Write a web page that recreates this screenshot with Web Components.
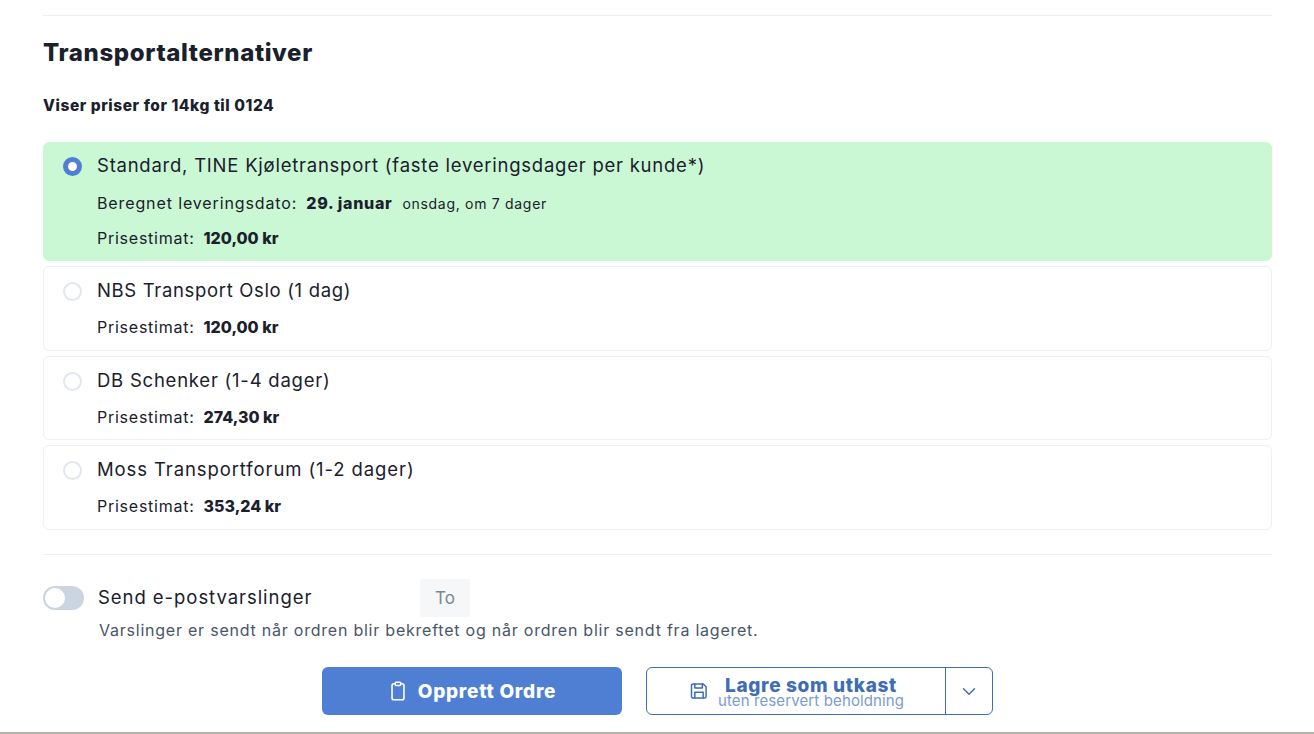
<!DOCTYPE html>
<html lang="no">
<head>
<meta charset="utf-8">
<title>Transportalternativer</title>
<style>
      html,body {margin:0;padding:0;background:#fff}
      body {font-family:Inter,"Noto Sans",sans-serif;color:#1a202c;height:734px;overflow:hidden}
</style>
</head>
<body>

<template id=shipping-option-template>
      <style>
            :host {display:block;box-sizing:border-box;border:1px solid #edf0f4;border-radius:6px;height:84.5px;padding:11px 18px 0 19px;background:#fff}
            :host([selected]) {background:#caf7d4;border-color:#caf7d4;height:119px;padding-top:10px}
            :host([selected]) ::slotted(info-line) {margin-top:15px}
            :host([selected]) ::slotted(info-line:last-child) {margin-top:12px}
            .row {display:flex;gap:15px}
            .radio {width:19px;height:19px;box-sizing:border-box;border:2px solid #e2e7ef;border-radius:50%;background:#fff;flex:none;margin-top:4px}
            :host([selected]) .radio {border:5.5px solid #4f7fd3}
            .body {display:flex;flex-direction:column;min-width:0}
            .name {font-size:18.5px;line-height:24px;letter-spacing:var(--name-spacing,.7px);color:#1a202c;white-space:nowrap}
      </style>
      <div class=row>
            <span class=radio></span>
            <div class=body>
                  <span class=name><slot></slot></span>
                  <slot name=lines></slot>
            </div>
      </div>
</template>

<template id=info-line-template>
      <style>
            :host {display:flex;align-items:baseline;font-size:16px;line-height:22px;margin-top:14px;white-space:nowrap;color:#1a202c}
            .label {letter-spacing:.75px}
            b {font-weight:800;margin-left:9px;letter-spacing:0}
            small {font-size:14px;margin-left:10px;letter-spacing:.7px}
      </style>
      <span class=label><slot name=label></slot></span><b><slot name=value></slot></b><small><slot name=note></slot></small>
</template>

<template id=toggle-switch-template>
      <style>
            :host {display:block;flex:none;width:41px;height:24px;box-sizing:border-box;background:#cbd5e1;border-radius:12px;padding:2px}
            i {display:block;width:20px;height:20px;background:#fff;border-radius:50%}
      </style>
      <i></i>
</template>

<template id=primary-button-template>
      <style>
            :host {display:flex;align-items:center;justify-content:center;gap:9px;box-sizing:border-box;width:300px;height:48px;background:#4f7fd3;border-radius:6px;color:#fff;font-size:19px;font-weight:800;letter-spacing:.75px}
            svg {width:22px;height:22px;display:block}
      </style>
      <svg viewBox="0 0 24 24" fill="none" stroke="currentColor" stroke-width="1.7" stroke-linecap="round" stroke-linejoin="round"><path d="M9 4H7.500A2 2 0 0 0 5.500 6v13.500a2 2 0 0 0 2 2h9a2 2 0 0 0 2-2V6a2 2 0 0 0-2-2H15"/><rect x="9" y="2.500" width="6" height="3.500" rx="1"/></svg>
      <span><slot></slot></span>
</template>

<template id=draft-button-template>
      <style>
            :host {display:flex;box-sizing:border-box;width:347px;height:48px;border:1px solid #3f6db5;border-radius:6px;color:#3f6db5;background:#fff}
            .main {flex:1;display:flex;align-items:center;justify-content:center;gap:9px;border-right:1px solid #3f6db5;padding-left:2px}
            .main svg {width:20px;height:20px;display:block;flex:none}
            .txt {display:flex;flex-direction:column;align-items:center;position:relative;top:1px}
            .t1 {font-size:19px;line-height:18px;font-weight:800;letter-spacing:.65px}
            .t2 {font-size:15px;line-height:12px;color:#7b9bd2;letter-spacing:.12px}
            .drop {width:46px;flex:none;display:flex;align-items:center;justify-content:center}
            .drop svg {width:22px;height:22px;display:block}
      </style>
      <div class=main>
            <svg viewBox="0 0 24 24" fill="none" stroke="currentColor" stroke-width="1.8" stroke-linecap="round" stroke-linejoin="round"><path d="M5 3.500h12l3.500 3.500v11.500a2 2 0 0 1-2 2H5a2 2 0 0 1-2-2v-13a2 2 0 0 1 2-2z"/><path d="M7 3.500v5h9v-5"/><path d="M7 20.500v-7h10v7"/></svg>
            <div class=txt><span class=t1><slot></slot></span><span class=t2><slot name=sub></slot></span></div>
      </div>
      <div class=drop>
            <svg viewBox="0 0 24 24" fill="none" stroke="currentColor" stroke-width="1.6" stroke-linecap="round" stroke-linejoin="round"><path d="M6 9.500l6 6 6-6"/></svg>
      </div>
</template>

<template id=transport-panel-template>
      <style>
            :host {display:block;box-sizing:border-box;width:1229px;margin-left:43px;padding-top:15px;height:732px}
            hr {border:0;height:1px;background:#edeef0;margin:0}
            h2 {font-size:24px;line-height:30px;font-weight:800;margin:22px 0 0;color:#1a202c;letter-spacing:.63px}
            p.sum {font-size:15.5px;line-height:20px;font-weight:800;margin:28px 0 0;letter-spacing:.56px}
            .list {display:flex;flex-direction:column;gap:5px;margin-top:26px}
            .notify {margin-top:24.500px;display:flex;flex-direction:column}
            .top {display:flex;align-items:center;margin-top:24px;height:38px}
            .top span.lbl {font-size:18.500px;letter-spacing:.95px;margin-left:14px;width:322px;white-space:nowrap;position:relative;top:-1px}
            .addon {width:50px;height:38px;background:#f6f7f9;color:#7c8593;font-size:17px;display:flex;align-items:center;justify-content:center;box-sizing:border-box;border-radius:3px 0 0 3px}
            .desc {font-size:16px;line-height:20px;color:#4a5568;margin:3px 0 0 56px;letter-spacing:.77px;white-space:nowrap}
            .actions {display:flex;gap:24px;justify-content:center;margin-top:27px;padding-right:1px}
      </style>
      <hr>
      <h2><slot name=title></slot></h2>
      <p class=sum><slot name=summary></slot></p>
      <div class=list><slot></slot></div>
      <div class=notify>
            <hr>
            <div class=top>
                  <toggle-switch></toggle-switch>
                  <span class=lbl>Send e-postvarslinger</span>
                  <span class=addon>To</span>
            </div>
            <div class=desc>Varslinger er sendt når ordren blir bekreftet og når ordren blir sendt fra lageret.</div>
      </div>
      <div class=actions><slot name=actions></slot></div>
</template>

<template id=page-footer-line-template>
      <style>
            :host {display:block;height:2px;background:#b8b3a8}
      </style>
</template>

<transport-panel>
      <span slot=title>Transportalternativer</span>
      <span slot=summary>Viser priser for 14kg til 0124</span>

      <shipping-option selected style="--name-spacing:.76px">Standard, TINE Kjøletransport (faste leveringsdager per kunde*)
            <info-line slot=lines><span slot=label style="letter-spacing:.88px">Beregnet leveringsdato:</span><span slot=value style="letter-spacing:.7px">29. januar</span><span slot=note>onsdag, om 7 dager</span></info-line>
            <info-line slot=lines><span slot=label>Prisestimat:</span><span slot=value>120,00 kr</span></info-line>
      </shipping-option>
      <shipping-option style="--name-spacing:.66px">NBS Transport Oslo (1 dag)
            <info-line slot=lines><span slot=label>Prisestimat:</span><span slot=value>120,00 kr</span></info-line>
      </shipping-option>
      <shipping-option style="--name-spacing:.76px">DB Schenker (1-4 dager)
            <info-line slot=lines><span slot=label>Prisestimat:</span><span slot=value>274,30 kr</span></info-line>
      </shipping-option>
      <shipping-option style="--name-spacing:.9px">Moss Transportforum (1-2 dager)
            <info-line slot=lines><span slot=label>Prisestimat:</span><span slot=value>353,24 kr</span></info-line>
      </shipping-option>

      <primary-button slot=actions>Opprett Ordre</primary-button>
      <draft-button slot=actions>Lagre som utkast<span slot=sub>uten reservert beholdning</span></draft-button>
</transport-panel>
<page-footer-line></page-footer-line>

<script>

      function component(name,templateId){
            customElements.define(name,class extends HTMLElement {
                  constructor(){
                        super();
                        var shadow    = this.attachShadow({mode:"open"});
                        shadow.appendChild(document.getElementById(templateId).content.cloneNode(true));
                  }//constructor
            });
      }//component

      component('toggle-switch','toggle-switch-template');
      component('info-line','info-line-template');
      component('shipping-option','shipping-option-template');
      component('primary-button','primary-button-template');
      component('draft-button','draft-button-template');
      component('transport-panel','transport-panel-template');
      component('page-footer-line','page-footer-line-template');

</script>
</body>
</html>
